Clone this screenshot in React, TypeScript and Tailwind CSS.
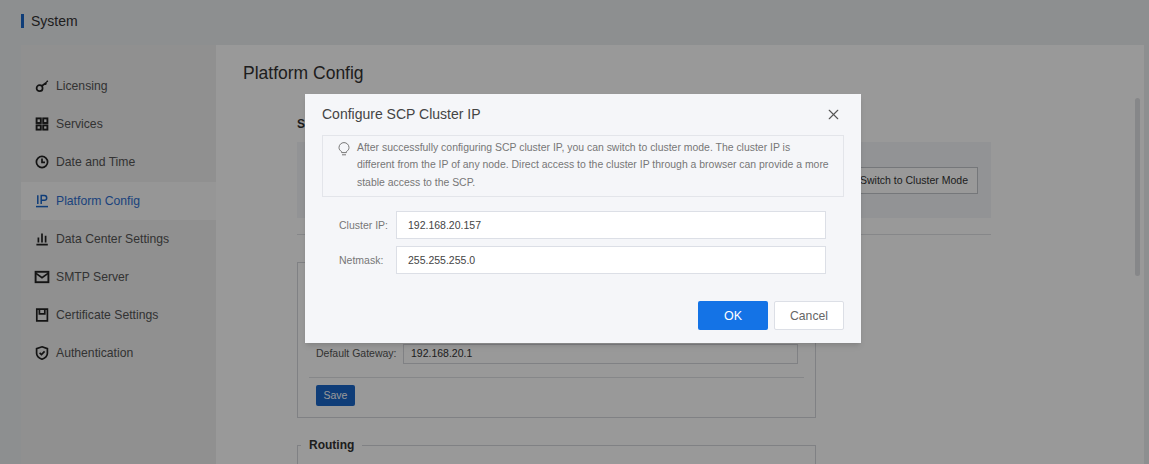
import React from "react";
import { X } from "lucide-react";

const Icon = ({ children }: { children: React.ReactNode }) => (
  <svg width="16" height="16" viewBox="0 0 16 16" fill="none" stroke="currentColor" strokeWidth="1.7" className="shrink-0">
    {children}
  </svg>
);

const items: { label: string; icon: React.ReactNode; active?: boolean }[] = [
  {
    label: "Licensing",
    icon: (
      <Icon>
        <circle cx="5.6" cy="10.2" r="3" />
        <path d="M7.8 8 12.6 4.4M11.4 5.2l.9 1.3M12.8 2.8l.8 1.2" />
      </Icon>
    ),
  },
  {
    label: "Services",
    icon: (
      <Icon>
        <rect x="2.6" y="2.4" width="4.2" height="4.6" strokeWidth="1.9" />
        <rect x="9.2" y="2.4" width="4.2" height="4.6" strokeWidth="1.9" />
        <rect x="2.6" y="9.4" width="4.2" height="4.2" strokeWidth="1.9" />
        <rect x="9.2" y="9.4" width="4.2" height="4.2" strokeWidth="1.9" />
      </Icon>
    ),
  },
  {
    label: "Date and Time",
    icon: (
      <Icon>
        <circle cx="8" cy="8" r="5.6" />
        <path d="M8 4.6V8.4H11" />
      </Icon>
    ),
  },
  {
    label: "Platform Config",
    active: true,
    icon: (
      <Icon>
        <path d="M3.8 2.2V11M7.2 11V2.6H10.4A2.3 2.3 0 0 1 10.4 7.2H7.2" strokeWidth="1.5" />
        <path d="M2 13.6H14" strokeWidth="1.5" />
      </Icon>
    ),
  },
  {
    label: "Data Center Settings",
    icon: (
      <Icon>
        <path d="M4.4 6.5V11.5M8 2.4V11.5M11.6 4.8V11.5M2.4 13.6H13.8" />
      </Icon>
    ),
  },
  {
    label: "SMTP Server",
    icon: (
      <Icon>
        <rect x="1.6" y="2.8" width="12.8" height="10.4" strokeWidth="1.9" />
        <path d="M2 4.4 8 8.8l6-4.4" />
      </Icon>
    ),
  },
  {
    label: "Certificate Settings",
    icon: (
      <Icon>
        <path d="M2.8 2.2H13.4V13.8H2.8Z" />
        <path d="M5.4 2.2V6.8H10.8V2.2" />
      </Icon>
    ),
  },
  {
    label: "Authentication",
    icon: (
      <Icon>
        <path d="M8 1.8 13.4 3.6V8.2C13.4 11 11 13 8 14.2 5 13 2.6 11 2.6 8.2V3.6Z" />
        <path d="M5.6 7.8 7.5 9.6 10.6 6.4" />
      </Icon>
    ),
  },
];

export default function App() {
  return (
    <div
      className="relative h-[464px] w-[1149px] overflow-hidden bg-[#eceef1] text-[#333]"
      style={{ fontFamily: '"Liberation Sans", Arial, sans-serif' }}
    >
      <div className="flex h-[45px] items-start pl-[21px] pt-[14px]">
        <div className="flex h-[14px] items-center border-l-[3px] border-[#1a66c9] pl-[7px] text-[14px] text-[#333]">System</div>
      </div>

      <div className="ml-[21px] flex h-[419px] w-[1123px] bg-white">
        <nav className="w-[195px] shrink-0 bg-[#f0f0f0] pt-[22px]">
          {items.map((it) => (
            <div
              key={it.label}
              className={`flex h-[38.2px] items-center gap-[6px] pl-[13px] text-[12.2px] ${
                it.active ? "bg-[#fbfbfb] text-[#2f6fd0]" : "text-[#555]"
              }`}
            >
              <span className={it.active ? "text-[#1a66c9]" : "text-[#222]"}>{it.icon}</span>
              <span>{it.label}</span>
            </div>
          ))}
        </nav>

        <main className="relative flex-1 pl-[27px]">
          <h1 className="mt-[17px] text-[17.5px] leading-[22px] text-[#333]">Platform Config</h1>
          <div className="ml-[54px] w-[694px]">
            <div className="mt-[31px] h-[18px] text-[12px] font-bold leading-[18px]">Status</div>
            <div className="mt-[9px] flex h-[76px] items-center justify-end bg-[#f3f5f8] pr-[13px]">
              <button className="h-[27px] w-[128px] border border-[#c4c6cb] bg-white pt-[2px] text-[10.5px] text-[#333]">
                Switch to Cluster Mode
              </button>
            </div>
            <div className="mt-[16px] border-t border-[#dfe1e5]" />
          </div>

          <div className="ml-[54px] mt-[27px] flex h-[156px] w-[519px] flex-col justify-end border border-[#d6d8dc] px-[11px] pb-[11px]">
            <div className="flex h-[19px] items-center pl-[7px]">
              <span className="w-[87px] text-[10.5px] text-[#555]">Default Gateway:</span>
              <div className="flex h-[20px] w-[395px] items-center border border-[#d6d8dc] bg-white pl-[7px] text-[10.5px] text-[#333]">
                192.168.20.1
              </div>
            </div>
            <div className="mt-[14px] border-t border-[#dfe1e5]" />
            <button className="ml-[7px] mt-[7px] h-[21px] w-[39px] rounded-[2px] bg-[#1a66c9] text-[10.5px] text-white">Save</button>
          </div>

          <div className="relative ml-[54px] mt-[27px] h-[40px] w-[519px] border border-[#d6d8dc]">
            <span className="absolute left-[3px] top-[-9px] bg-white px-[8px] text-[12px] font-bold leading-[16px] text-[#333]">Routing</span>
          </div>

          <div className="absolute right-[4px] top-[53px] h-[178px] w-[5px] rounded bg-[#e0e1e4]" />
        </main>
      </div>

      <div className="absolute inset-0 bg-black/40 pl-[305px] pt-[94px]">
        <div className="w-[556px] bg-[#f5f6f9] px-[17px] pb-[13px] shadow-md">
          <div className="flex h-[41px] items-center justify-between">
            <span className="text-[14px] text-[#444]">Configure SCP Cluster IP</span>
            <X size={17} strokeWidth={1.6} className="mr-[2px] text-[#555]" />
          </div>
          <div className="flex h-[62px] gap-[7px] border border-[#e3e5ea] py-[3px] pl-[15px] pr-[12px]">
            <svg width="12" height="14" viewBox="0 0 12 14" fill="none" stroke="#777" strokeWidth="1" className="mt-[3px] shrink-0">
              <path d="M3.6 9.6C2 8.6 1 7.3 1 5.6a5 5 0 0 1 10 0c0 1.7-1 3-2.6 4V10.6H3.6Z" />
              <path d="M4 12.8H8" />
            </svg>
            <p className="whitespace-nowrap text-[10.45px] leading-[17.3px] text-[#777]">
              After successfully configuring SCP cluster IP, you can switch to cluster mode. The cluster IP is
              <br />
              different from the IP of any node. Direct access to the cluster IP through a browser can provide a more
              <br />
              stable access to the SCP.
            </p>
          </div>
          <div className="mt-[14px] flex flex-col gap-[7px] pl-[17px]">
            {[
              ["Cluster IP:", "192.168.20.157"],
              ["Netmask:", "255.255.255.0"],
            ].map(([l, v]) => (
              <div key={l} className="flex items-center">
                <span className="w-[57px] pt-[1px] text-[10.5px] text-[#777]">{l}</span>
                <div className="flex h-[28px] w-[430px] items-center border border-[#dcdfe6] bg-white pl-[11px] pt-[1px] text-[10.5px] text-[#444]">
                  {v}
                </div>
              </div>
            ))}
          </div>
          <div className="mt-[27px] flex justify-end gap-[6px]">
            <button className="h-[29px] w-[70px] rounded-[2px] bg-[#1473e6] pt-[1px] text-[12.5px] text-white">OK</button>
            <button className="h-[29px] w-[70px] rounded-[2px] border border-[#dcdfe6] bg-white pt-[1px] text-[12.2px] text-[#666]">Cancel</button>
          </div>
        </div>
      </div>
    </div>
  );
}
